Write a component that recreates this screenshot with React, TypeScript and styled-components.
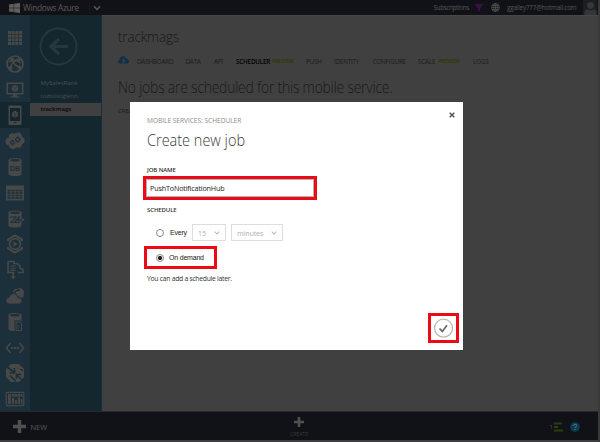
import React from "react";
import styled, { createGlobalStyle } from "styled-components";

const Global = createGlobalStyle`
  * { box-sizing: border-box; }
  html, body { margin: 0; padding: 0; overflow: hidden; background: #404040; }
  body { font-family: "Open Sans", "Noto Sans", sans-serif; }
`;

const Page = styled.div`
  position: relative;
  width: 600px;
  height: 442px;
  display: flex;
  flex-direction: column;
  background: #404040;
  border-right: 2px solid #393939;
  overflow: hidden;
`;

const TopBar = styled.header`
  flex: 0 0 15px;
  display: flex;
  align-items: center;
  background: #111217;
  color: #5b5b5c;
  padding: 0 1px 0 9px;
`;
const Brand = styled.span`
  margin-left: 3px;
  width: 66px;
  font-size: 8.4px;
  line-height: 15px;
  letter-spacing: -0.35px;
  white-space: nowrap;
`;
const BrandMenu = styled.div`
  height: 11px;
  padding-left: 3px;
  display: flex;
  align-items: center;
  border-left: 1px solid #191a1f;
`;
const Account = styled.div`
  margin-left: auto;
  display: flex;
  align-items: center;
  font-size: 6.3px;
  line-height: 15px;
  color: #565656;
  white-space: nowrap;
`;
const AccountText = styled.span<{ $w: number; $ls: number }>`
  width: ${(p) => p.$w}px;
  letter-spacing: ${(p) => p.$ls}px;
`;
const GlobeIcon = styled.svg`
  margin: 0 7px 0 8px;
`;
const Avatar = styled.div`
  width: 14px;
  height: 15px;
  background: #1b1f23;
`;

const Body = styled.div`
  flex: 1;
  display: flex;
  min-height: 0;
`;
const IconRail = styled.nav`
  flex: 0 0 30px;
  padding-top: 10px;
  background: #1b303a;
  color: #484848;
`;
const RailItem = styled.div<{ $active?: boolean }>`
  height: 25.82px;
  display: flex;
  align-items: center;
  justify-content: center;
  background: ${(p) => (p.$active ? "#14272f" : "transparent")};
  --hole: ${(p) => (p.$active ? "#14272f" : "#1b303a")};
`;
const ServiceNav = styled.nav`
  flex: 0 0 72px;
  background: #14272e;
  border-right: 1px solid #123039;
`;
const BackWrap = styled.div`
  height: 62px;
  padding: 12px 0 0 9px;
`;
const ServiceItem = styled.div<{ $active?: boolean }>`
  height: 13px;
  padding-left: 10.5px;
  font-size: 6px;
  line-height: 12.5px;
  letter-spacing: ${(p) => (p.$active ? -0.12 : 0.05)}px;
  font-weight: ${(p) => (p.$active ? 700 : 400)};
  color: ${(p) => (p.$active ? "#101010" : "#4a4f51")};
  background: ${(p) => (p.$active ? "#404040" : "transparent")};
`;
const Content = styled.main`
  flex: 1;
  min-width: 0;
  padding: 8px 0 0 16px;
  border-top: 1px solid #48464a;
`;
const Title = styled.h1`
  margin: 0;
  font-size: 14.6px;
  line-height: 24px;
  font-weight: 300;
  letter-spacing: -0.2px;
  transform: scaleX(0.93);
  transform-origin: left;
  color: #171717;
`;
const Tabs = styled.div`
  display: flex;
  align-items: center;
  height: 11px;
  margin-top: 8px;
  font-size: 6.3px;
  line-height: 11px;
  white-space: nowrap;
`;
const CloudSlot = styled.div`
  width: 19px;
  height: 11px;
`;
const Tab = styled.span<{ $w: number; $active?: boolean }>`
  width: ${(p) => p.$w}px;
  letter-spacing: -0.2px;
  color: ${(p) => (p.$active ? "#000" : "#1c1c1c")};
  font-weight: ${(p) => (p.$active ? 600 : 400)};
`;
const Preview = styled.span<{ $w: number }>`
  width: ${(p) => p.$w}px;
  font-size: 5px;
  font-weight: 700;
  letter-spacing: -0.05px;
  color: #2c3d05;
`;
const Empty = styled.h2`
  margin: 8px 0 0;
  font-size: 15.6px;
  line-height: 24px;
  font-weight: 300;
  letter-spacing: -0.25px;
  transform: scaleX(0.894);
  transform-origin: left;
  color: #191919;
  white-space: nowrap;
`;
const CreateLink = styled.div`
  margin-top: 7px;
  font-size: 6px;
  line-height: 10px;
  color: #191919;
`;

const Footer = styled.footer`
  flex: 0 0 31px;
  display: grid;
  grid-template-columns: 250px 98px 1fr;
  background: #111217;
  border-top: 1px solid #29292b;
  border-bottom: 2px solid #3c3e42;
  color: #4c4c4c;
`;
const NewButton = styled.div`
  display: flex;
  align-items: center;
  gap: 4.5px;
  padding: 1px 0 0 13px;
  font-size: 7.4px;
  color: #5a5a5a;
`;
const CreateButton = styled.div`
  display: flex;
  flex-direction: column;
  align-items: center;
  padding-top: 5px;
  font-size: 5.4px;
  line-height: 9px;
  letter-spacing: -0.2px;
  color: #38383b;
  gap: 3px;
`;
const Status = styled.div`
  display: flex;
  justify-content: flex-end;
  align-items: center;
  padding: 1px 18px 0 0;
  font-size: 6px;
`;
const StatusGap = styled.span`
  width: 7px;
`;

const Dialog = styled.section`
  position: absolute;
  left: 130px;
  top: 102px;
  width: 333px;
  height: 248px;
  background: #fff;
  padding: 0 4px 0 17px;
  display: flex;
  flex-direction: column;
  color: #222;
`;
const DialogHead = styled.div`
  display: flex;
  justify-content: space-between;
  height: 25px;
  padding: 8px 4px 0 0;
`;
const CloseIcon = styled.svg`
  margin-top: 1px;
`;
const Crumb = styled.div`
  padding-top: 5px;
  font-size: 6.6px;
  line-height: 12px;
  letter-spacing: -0.03px;
  color: #8b8b8b;
`;
const DialogTitle = styled.h2`
  margin: 1px 0 0;
  font-size: 15.5px;
  line-height: 24px;
  font-weight: 300;
  transform: scaleX(0.935);
  transform-origin: left;
  color: #3c3c3c;
`;
const Label = styled.div<{ $top: number }>`
  margin-top: ${(p) => p.$top}px;
  font-size: 6px;
  line-height: 10px;
  height: 10px;
  font-weight: 600;
  letter-spacing: -0.1px;
  color: #333;
`;
const Highlight = styled.div<{ $w: number; $h: number; $left: number; $top: number }>`
  flex: none;
  width: ${(p) => p.$w}px;
  height: ${(p) => p.$h}px;
  margin: ${(p) => p.$top}px 0 0 ${(p) => p.$left}px;
  border: 3px solid #ee0a14;
  display: flex;
  align-items: center;
`;
const Input = styled.input`
  width: 168px;
  height: 18px;
  border: 1px solid #aab4ba;
  padding: 0 3px;
  margin: 0;
  outline: none;
  background: #fff;
  font: 400 7.2px "Open Sans", "Noto Sans", sans-serif;
  letter-spacing: -0.16px;
  color: #222;
`;
const EveryRow = styled.div<{ $top?: number }>`
  display: flex;
  align-items: center;
  height: 17px;
  margin-top: ${(p) => p.$top ?? 0}px;
  padding-left: 9px;
  font-size: 7px;
`;
const Radio = styled.span<{ $on?: boolean }>`
  width: 8px;
  height: 8px;
  border-radius: 50%;
  border: 1px solid #888;
  background: ${(p) => (p.$on ? "radial-gradient(circle, #222 0 1.8px, #fff 2.4px)" : "#fff")};
`;
const RadioText = styled.span<{ $gap: number; $w: number }>`
  margin-left: ${(p) => p.$gap}px;
  width: ${(p) => p.$w}px;
  font: 400 7px "Liberation Sans", sans-serif;
  letter-spacing: -0.2px;
  white-space: nowrap;
  color: #222;
`;
const Select = styled.div<{ $w: number }>`
  width: ${(p) => p.$w}px;
  height: 17px;
  margin-right: 5px;
  padding: 0 5px;
  display: flex;
  align-items: center;
  justify-content: space-between;
  border: 1px solid #ddd;
  font-size: 7.1px;
  letter-spacing: -0.1px;
  color: #b0b0b0;
`;
const Hint = styled.div`
  margin-top: 4px;
  font-size: 6.8px;
  line-height: 12px;
  letter-spacing: -0.27px;
  color: #333;
`;
const DialogFoot = styled.div`
  margin-top: auto;
  padding-bottom: 7px;
  display: flex;
  justify-content: flex-end;
`;

const Chevron = ({ w, color }: { w: number; color: string }) => (
  <svg width={w} height={w} viewBox="0 0 8 8" fill="none" stroke={color} strokeWidth="1.4">
    <path d="M1 2.2 4 5.4 7 2.2" />
  </svg>
);

const Plus = ({ s }: { s: number }) => (
  <svg width={s} height={s} viewBox="0 0 12 12" fill="#50504f">
    <path d="M4.4 0h3.2v4.4H12v3.2H7.6V12H4.4V7.6H0V4.4h4.4z" />
  </svg>
);

const hole = { fill: "var(--hole)" };
const cut = { stroke: "var(--hole)", fill: "none" };

const railIcons: React.ReactNode[] = [
  <g>
    {[0, 1, 2, 3].flatMap((r) =>
      [0, 1, 2, 3].map((c) => <rect key={`${r}-${c}`} x={3 + c * 3.65} y={3 + r * 3.65} width="3" height="3" />)
    )}
  </g>,
  <g>
    <circle cx="10" cy="10" r="8" fill="none" stroke="currentColor" strokeWidth="1.7" />
    <path d="M7 5Q9 13 16 13M14 5Q6 8 5 15M4 8Q10 4 16 9" fill="none" stroke="currentColor" strokeWidth="1.4" />
    <circle cx="7" cy="5.5" r="2" />
    <circle cx="14" cy="6" r="1.7" />
    <circle cx="5.5" cy="14" r="2" />
    <circle cx="14.5" cy="13.5" r="1.8" />
  </g>,
  <g>
    <path d="M1.5 2.5h17v12h-17z" />
    <path d="M3 4h14v9H3z" style={hole} />
    <path d="m10 5 3 1.6v3.6L10 12l-3-1.8V6.6z" />
    <path d="m7.3 6.8 2.7 1.5 2.7-1.5M10 8.3v3.4" strokeWidth=".5" style={cut} />
    <path d="M8 14.5h4v2h3v1H5v-1h3z" />
  </g>,
  <g>
    <rect x="3.5" y="0.5" width="13" height="19.500" rx="1" />
    <path d="M5 3h10v13H5z" style={hole} />
    <path d="m10 5.8 3 1.6V11l-3 1.8L7 11V7.4z" />
    <path d="m7.3 7.6 2.7 1.5 2.7-1.5M10 9.1v3.4" strokeWidth=".5" style={cut} />
    <path d="M8.5 17.800h3" strokeWidth="1" style={cut} />
  </g>,
  <g>
    <circle cx="4.2" cy="10.5" r="3.7" />
    <circle cx="7.5" cy="6" r="3.7" />
    <circle cx="13" cy="5.5" r="3.9" />
    <circle cx="16" cy="9.5" r="3.6" />
    <circle cx="13.5" cy="13.5" r="3.3" />
    <circle cx="8" cy="14" r="4" />
    <path d="M5 7h10v6H5z" />
    <circle cx="7.5" cy="11.5" r="1.700" strokeWidth="1.2" style={cut} />
    <circle cx="12.7" cy="8.5" r="1.900" strokeWidth="1.2" style={cut} />
    <path d="M7.5 8.6v1M7.5 13.4v1M4.6 11.5h1M12.7 5.2v1M12.7 10.8v1M15 8.5h1" strokeWidth="1" style={cut} />
  </g>,
  <g>
    <path d="M3.5 3Q3.5 1 10 1t6.500 2v14q0 2-6.500 2t-6.500-2z" />
    <ellipse cx="10" cy="3.2" rx="4.800" ry="1.2" style={hole} />
    <text x="10" y="13.800" textAnchor="middle" fontSize="7" fontWeight="700" fontFamily="Liberation Sans" style={hole}>DB</text>
  </g>,
  <g>
    <path d="M1 2.500h18v15H1z" />
    {[0, 1, 2, 3].flatMap((r) =>
      [0, 1, 2, 3].map((c) => <rect key={`${r}-${c}`} x={2.4 + c * 4} y={6.800 + r * 2.500} width="3.100" height="1.600" style={hole} />)
    )}
  </g>,
  <g>
    <path d="M3.500 3.500Q3.500 1.500 10 1.500t6.500 2v13q0 2-6.500 2t-6.500-2z" />
    <ellipse cx="10" cy="3.700" rx="4.800" ry="1.200" style={hole} />
    <path d="M5 8h6l-5 5.500h5M14 7v6.500H9.500L14 8M10.500 11h7" strokeWidth="1.100" style={cut} />
    <circle cx="18" cy="10.800" r="1.300" />
  </g>,
  <g fill="none" stroke="currentColor">
    <path d="M3 7V5.500L10 1.500l7 4V7M3 13v1.500l7 4 7-4V13" strokeWidth="2" />
    <circle cx="10" cy="10" r="5.400" strokeWidth="1.700" />
    <path d="m8.500 7.300 4 2.700-4 2.700z" fill="currentColor" stroke="none" />
  </g>,
  <g>
    <path d="M8 12.500H3V1.500h6v2h3q3 1.500 3.500 5l2.500 1v3h-5" fill="none" stroke="currentColor" strokeWidth="1.600" />
    <path d="M5.500 6h5M5.500 8.200h5M5.500 10.400h5" stroke="currentColor" strokeWidth="1.100" />
    <path d="M7.300 12h1.800v4.500H11L8.200 19.500 5.500 16.500h1.800z" />
  </g>,
  <g>
    <path d="M8 6q1-4 5-3 2-2 4 0 3 2 1.500 5 1 3-2.500 4" />
    <path d="M10 7q0-3 5-3" strokeWidth="1.300" style={cut} />
    <path d="M4.500 18Q1 18 1 14.800q0-3 3-3.300 1-4 4.500-4t4.500 4q4 .2 4 3.300T13.500 18z" strokeWidth=".8" style={{ stroke: "var(--hole)" }} />
  </g>,
  <g>
    <path d="M3.500 3Q3.500 1 10 1t6.500 2v14q0 2-6.500 2t-6.500-2z" />
    <ellipse cx="10" cy="3.200" rx="4.800" ry="1.200" style={hole} />
    <path d="M9.500 8.500h6l2 2v9h-8z" style={hole} />
    <path d="M11 10h4l1.500 1.500v7H11z" fill="none" stroke="currentColor" strokeWidth="1" />
    <path d="M13 13v4" stroke="currentColor" />
  </g>,
  <g>
    <path d="M5.500 5 1.500 10l4 5M14.500 5l4 5-4 5" fill="none" stroke="currentColor" strokeWidth="1.600" />
    <circle cx="7" cy="10" r="1.200" />
    <circle cx="10" cy="10" r="1.200" />
    <circle cx="13" cy="10" r="1.200" />
  </g>,
  <g>
    <path d="M6 1h8l5 5v8l-5 5H6l-5-5V6z" />
    <path d="M2.500 4 8.500 9M4.500 10H9.500V5" strokeWidth="1.700" style={cut} />
    <path d="m18 18-6-6M11.500 16v-4.500H16M5 12.500l6 6M18 8l-2.500-2" strokeWidth="1.500" style={cut} />
  </g>,
  <g>
    <rect x="1.200" y="3.300" width="17.600" height="13.400" rx="1" fill="none" stroke="currentColor" strokeWidth="1.200" />
    <path d="M3 5h2.800v10H3zM7 5h10.500v2.500H7zM7 9h2v6H7zM10 11h2v4h-2zM13 8.500h2V15h-2zM16 10h1.500v5H16z" />
    <path d="M9 6h1M12 6h1M15 6h1" strokeWidth="1" style={cut} />
  </g>,
];

const Cloud = () => (
  <svg width="11" height="8" viewBox="0 0 11 8">
    <path d="M2.200 7.500Q0 7.400 0 5.500 0 3.700 1.800 3.400 2 .5 5 .3q2 0 2.800 1.800Q9.500 2 9.800 3.700 11 4.100 11 5.600 11 7.500 9 7.500z" fill="#122f46" />
    <path d="m6 1.500-2.500 3h1.700L4.600 8 8 4.300H6z" fill="#404040" />
  </svg>
);

const tabs: { label: string; w: number; active?: boolean; preview?: number }[] = [
  { label: "DASHBOARD", w: 48.5 },
  { label: "DATA", w: 28.5 },
  { label: "API", w: 22 },
  { label: "SCHEDULER", w: 36, active: true, preview: 34 },
  { label: "PUSH", w: 28 },
  { label: "IDENTITY", w: 38.5 },
  { label: "CONFIGURE", w: 45.5 },
  { label: "SCALE", w: 20, preview: 35 },
  { label: "LOGS", w: 20 },
];

export default function App() {
  return (
    <>
      <Global />
      <Page>
        <TopBar>
          <svg width="11" height="10" viewBox="0 0 11 10" fill="#606060">
            <path d="M0 1.500 4.600.800v3.900H0zM5.100.700 11 0v4.700H5.100zM0 5.200h4.600v3.900L0 8.400zM5.100 5.200H11V10l-5.900-.8z" />
          </svg>
          <Brand>Windows Azure</Brand>
          <BrandMenu><Chevron w={8} color="#5a5a5a" /></BrandMenu>
          <Account>
            <AccountText $w={41.5} $ls={-0.33}>Subscriptions</AccountText>
            <svg width="8" height="8" viewBox="0 0 8 8"><path d="M0 0h8v1L5 4.200V8L3 6.500V4.200L0 1z" fill="#3a1046" /></svg>
            <GlobeIcon width="9" height="9" viewBox="0 0 9 9" fill="none" stroke="#505050" strokeWidth=".8">
              <circle cx="4.500" cy="4.500" r="4" />
              <ellipse cx="4.500" cy="4.500" rx="1.900" ry="4" />
              <path d="M4.500.500v8M.5 4.500h8M1.200 2.500h6.600M1.200 6.500h6.600" />
            </GlobeIcon>
            <AccountText $w={76} $ls={-0.18}>ggailey777@hotmail.com</AccountText>
            <Avatar>
              <svg width="14" height="15" viewBox="0 0 14 15" fill="#353638">
                <circle cx="7.500" cy="5.500" r="3.500" />
                <path d="M1.500 15v-3q0-2.500 2.500-2.500 3.500 1.500 7 0 2.500 0 2.500 2.500v3z" />
              </svg>
            </Avatar>
          </Account>
        </TopBar>
        <Body>
          <IconRail>
            {railIcons.map((icon, i) => (
              <RailItem key={i} $active={i === 3}>
                <svg width="20" height="20" viewBox="0 0 20 20" fill="currentColor">{icon}</svg>
              </RailItem>
            ))}
          </IconRail>
          <ServiceNav>
            <BackWrap>
              <svg width="39" height="39" viewBox="0 0 39 39" fill="none" stroke="#24393f">
                <circle cx="19.500" cy="19.500" r="18" strokeWidth="1.800" />
                <path d="M29 19.500H12M20 12l-8 7.500 8 7.500" strokeWidth="3.200" />
              </svg>
            </BackWrap>
            <ServiceItem>MySalesRank</ServiceItem>
            <ServiceItem>todolistglenn</ServiceItem>
            <ServiceItem $active>trackmags</ServiceItem>
          </ServiceNav>
          <Content>
            <Title>trackmags</Title>
            <Tabs>
              <CloudSlot><Cloud /></CloudSlot>
              {tabs.map((t) => (
                <React.Fragment key={t.label}>
                  <Tab $w={t.w} $active={t.active}>{t.label}</Tab>
                  {t.preview && <Preview $w={t.preview}>PREVIEW</Preview>}
                </React.Fragment>
              ))}
            </Tabs>
            <Empty>No jobs are scheduled for this mobile service.</Empty>
            <CreateLink>CREATE</CreateLink>
          </Content>
        </Body>
        <Footer>
          <NewButton><Plus s={13} />NEW</NewButton>
          <CreateButton><Plus s={10} />CREATE</CreateButton>
          <Status>
            1
            <svg width="10" height="10" viewBox="0 0 10 10" fill="#2b3f0d">
              <path d="M1 .5h8v2H1zM1 4h4v2H1zM1 7.500h9v2H1z" />
            </svg>
            <StatusGap />
            <svg width="10" height="10" viewBox="0 0 10 10">
              <circle cx="5" cy="5" r="4.800" fill="#0d3b55" />
              <path d="M3.500 3.800q0-1.600 1.600-1.600t1.600 1.400Q6.700 4.800 5.100 5.300v.8M5.100 7v1" fill="none" stroke="#567383" strokeWidth="1" />
            </svg>
          </Status>
        </Footer>

        <Dialog>
          <DialogHead>
            <Crumb>MOBILE SERVICES: SCHEDULER</Crumb>
            <CloseIcon width="6" height="8" viewBox="0 -1 6 8" stroke="#555" strokeWidth="1.500">
              <path d="m.7.700 4.600 4.600M5.300.700.700 5.300" />
            </CloseIcon>
          </DialogHead>
          <DialogTitle>Create new job</DialogTitle>
          <Label $top={13}>JOB NAME</Label>
          <Highlight $w={174} $h={24} $left={-4} $top={1}>
            <Input defaultValue="PushToNotificationHub" />
          </Highlight>
          <Label $top={5}>SCHEDULE</Label>
          <EveryRow $top={9}>
            <Radio />
            <RadioText $gap={6} $w={22}>Every</RadioText>
            <Select $w={34}>15<Chevron w={6} color="#bbb" /></Select>
            <Select $w={52}>minutes<Chevron w={6} color="#bbb" /></Select>
          </EveryRow>
          <Highlight $w={73} $h={23} $left={-3} $top={5}>
            <EveryRow>
              <Radio $on />
              <RadioText $gap={5} $w={36}>On demand</RadioText>
            </EveryRow>
          </Highlight>
          <Hint>You can add a schedule later.</Hint>
          <DialogFoot>
            <Highlight $w={31} $h={30} $left={0} $top={0}>
              <svg width="25" height="24" viewBox="0 0 25 24" fill="none">
                <circle cx="12.500" cy="12.200" r="9" stroke="#b9b9b9" strokeWidth="1.300" />
                <path d="m8.500 12.500 2.800 2.900 4.700-6.200" stroke="#666" strokeWidth="1.700" />
              </svg>
            </Highlight>
          </DialogFoot>
        </Dialog>
      </Page>
    </>
  );
}
